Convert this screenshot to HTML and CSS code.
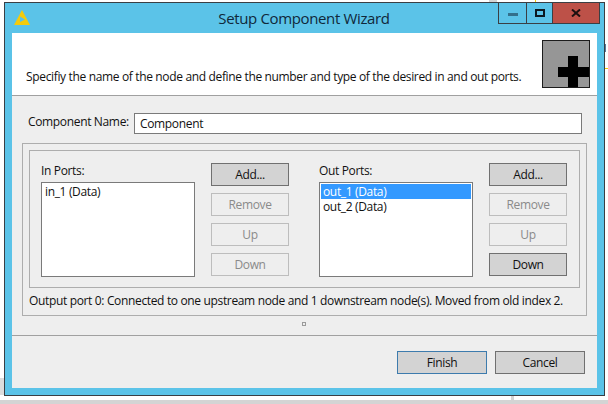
FILE: index.html
```html
<!DOCTYPE html>
<html lang="en">
<head>
<meta charset="utf-8">
<title>Setup Component Wizard</title>
<link rel="stylesheet" href="styles.css">
</head>
<body>
<div class="desktop">
  <div class="window">
    <div class="titlebar">
      <svg class="app-icon" width="16" height="15" viewBox="0 0 16 15"><path d="M8 0L16 15H0Z" fill="#f5cb0c"/><path d="M6 6.5L11 9.5L6 12Z" fill="#5bc3e8"/></svg>
      <div class="title">Setup Component Wizard</div>
      <div class="controls">
        <div class="ctl ctl-min"><span class="min-glyph"></span></div>
        <div class="ctl ctl-max"><span class="max-glyph"></span></div>
        <div class="ctl ctl-close"><svg width="10" height="8" viewBox="0 0 10 8"><path d="M1 0.5L9 7.5M9 0.5L1 7.5" stroke="#1a1010" stroke-width="2" fill="none"/></svg></div>
      </div>
    </div>
    <div class="client">
      <div class="banner">
        <p class="banner-text">Specifiy the name of the node and define the number and type of the desired in and out ports.</p>
        <div class="node-icon"><svg width="46" height="46" viewBox="0 0 46 46"><path d="M25 15H35V26H46V36H35V46H25V36H15V26H25Z" fill="#000"/></svg></div>
      </div>
      <div class="main">
        <div class="name-row">
          <label class="name-label">Component Name:</label>
          <div class="name-input">Component</div>
        </div>
        <div class="outer-group">
          <div class="inner-group">
            <div class="port-col">
              <div class="port-list-col">
                <div class="port-label">In Ports:</div>
                <div class="list">
                  <div class="item">in_1 (Data)</div>
                </div>
              </div>
              <div class="buttons">
                <div class="btn btn-on">Add...</div>
                <div class="btn btn-off">Remove</div>
                <div class="btn btn-off">Up</div>
                <div class="btn btn-off">Down</div>
              </div>
            </div>
            <div class="port-col">
              <div class="port-list-col">
                <div class="port-label">Out Ports:</div>
                <div class="list">
                  <div class="item item-selected">out_1 (Data)</div>
                  <div class="item">out_2 (Data)</div>
                </div>
              </div>
              <div class="buttons">
                <div class="btn btn-on">Add...</div>
                <div class="btn btn-off">Remove</div>
                <div class="btn btn-off">Up</div>
                <div class="btn btn-on">Down</div>
              </div>
            </div>
          </div>
          <div class="status">Output port 0: Connected to one upstream node and 1 downstream node(s). Moved from old index 2.</div>
        </div>
        <div class="sash"><span class="sash-dot"></span></div>
      </div>
      <div class="footer">
        <div class="btn wide btn-default">Finish</div>
        <div class="btn wide btn-on">Cancel</div>
      </div>
    </div>
  </div>
  <div class="taskstrip"></div>
</div>
</body>
</html>
```
FILE: styles.css
```css
* { box-sizing: border-box; }
html, body { margin: 0; padding: 0; }
body {
  width: 608px;
  height: 404px;
  overflow: hidden;
  background: #fff;
  font-family: "Open Sans", "Noto Sans", sans-serif;
  font-size: 12px;
  letter-spacing: -0.345px;
  color: #111;
}
.desktop {
  width: 608px;
  height: 404px;
  display: flex;
  flex-direction: column;
  padding-top: 2px;
  background:
    linear-gradient(#f5cb0c, #f5cb0c) 605px 68px / 3px 1px no-repeat,
    linear-gradient(#5a7a9a, #5a7a9a) 605px 44px / 1px 8px no-repeat,
    linear-gradient(#f5cb0c, #f5cb0c) 535px 0 / 1px 2px no-repeat,
    linear-gradient(#d4d4d4, #d4d4d4) 489px 0 / 8px 2px no-repeat,
    linear-gradient(#d4d4d4, #d4d4d4) 511px 396px / 3px 4px no-repeat,
    linear-gradient(#dcdcdc, #dcdcdc) 0 378px / 4px 17px no-repeat;
}
.window {
  width: 601px;
  height: 394px;
  margin-left: 4px;
  border: 1px solid #3a3f44;
  background: #5bc3e8;
  display: flex;
  flex-direction: column;
  padding: 0 7px 7px 7px;
}
.titlebar {
  height: 30px;
  flex: none;
  display: flex;
  align-items: center;
  justify-content: center;
  position: relative;
}
.app-icon { position: absolute; left: 2px; top: 7px; }
.title { font-size: 15px; letter-spacing: -0.36px; color: #10283a; padding-right: 1px; }
.controls {
  position: absolute;
  right: -3px;
  top: 0;
  display: flex;
  height: 21px;
  border: 1px solid #3a3f44;
  border-top: 0;
}
.ctl { display: flex; align-items: center; justify-content: center; height: 100%; }
.ctl-min { width: 28px; border-right: 1px solid #3a3f44; }
.ctl-max { width: 26px; border-right: 1px solid #3a3f44; }
.ctl-close { width: 46px; background: #bd5148; }
.min-glyph { width: 10px; height: 3px; background: #33708c; margin-top: 3px; }
.max-glyph { width: 10px; height: 8px; border: 2px solid #0c1a22; }
.client {
  flex: 1;
  background: #eeeeee;
  display: flex;
  flex-direction: column;
}
.banner {
  height: 63px;
  flex: none;
  background: #fff;
  border-bottom: 1px solid #a0a0a0;
  display: flex;
  justify-content: space-between;
  padding: 7px 7px 0 14px;
}
.banner-text { margin: 29px 0 0; line-height: 16px; white-space: nowrap; }
.node-icon {
  width: 48px;
  height: 48px;
  background: #969696;
  border: 1px solid #1c1c1c;
}
.node-icon svg { display: block; }
.main { flex: none; padding: 0 10px; }
.name-row { display: flex; align-items: center; padding-top: 16px; height: 38px; }
.name-label { width: 112px; padding-left: 6px; margin-bottom: 4px; }
.name-input {
  width: 448px;
  height: 21px;
  background: #fff;
  border: 1px solid #7a7a7a;
  padding-left: 5px;
  line-height: 20px;
}
.outer-group {
  margin-top: 9px;
  width: 565px;
  height: 173px;
  border: 1px solid #adadad;
  padding: 6px;
}
.inner-group {
  width: 551px;
  height: 138px;
  border: 1px solid #adadad;
  display: flex;
  padding-left: 11px;
}
.port-col { flex: none; width: 278px; display: flex; padding-top: 12px; }
.port-col + .port-col { width: 248px; }
.port-list-col { width: 154px; }
.port-label { height: 19px; line-height: 16px; }
.list { width: 154px; height: 95px; border: 1px solid #7a7a7a; background: #fff; padding: 1px; }
.item { height: 15px; line-height: 15px; padding-left: 2px; }
.item-selected { background: #3399ff; color: #fff; }
.buttons { display: flex; flex-direction: column; gap: 7px; margin-left: 16px; }
.btn {
  width: 78px;
  height: 23px;
  display: flex;
  align-items: center;
  justify-content: center;
  border: 1px solid #adadad;
}
.btn-on { background: #d3d3d3; border-color: #707070; }
.btn-off { background: #eeeeee; border-color: #bdbdbd; color: #8a8a8a; }
.btn-default { background: #d3d3d3; border-color: #3d7bad; }
.status { margin-top: 5px; line-height: 16px; white-space: nowrap; }
.sash { height: 19px; display: flex; justify-content: center; padding-top: 6px; padding-right: 1px; }
.sash-dot { width: 4px; height: 4px; border: 1px solid #9a9a9a; }
.footer {
  flex: 1;
  border-top: 1px solid #a0a0a0;
  display: flex;
  justify-content: flex-end;
  gap: 8px;
  padding: 15px 12px 0 0;
}
.wide { width: 90px; }
.taskstrip { flex: none; margin-top: 4px; height: 4px; background: #d4d4d4; }
```
